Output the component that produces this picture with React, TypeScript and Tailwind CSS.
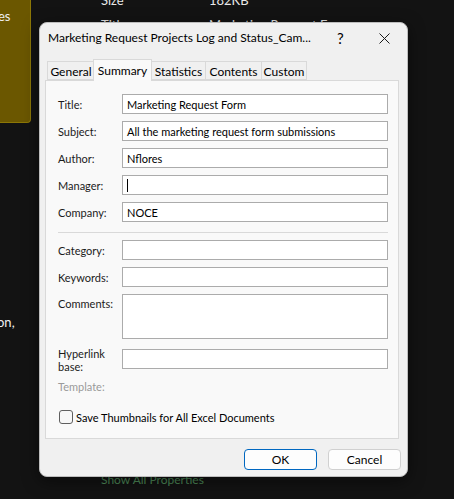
import { useState } from 'react'

// ── Field rows ────────────────────────────────────────────────────────────────

interface FieldProps {
  label: string
  value?: string
  caret?: boolean
}

function Field({ label, value = '', caret = false }: FieldProps) {
  return (
    <div className="flex h-[20px] items-center">
      <span className="w-[64px] shrink-0 text-[#1b1b1b]">{label}</span>
      <div className="flex h-[20px] flex-1 items-center border border-[#ababab] bg-white px-[4px] text-black">
        {caret && <span className="h-[13px] w-px bg-black" />}
        {value}
      </div>
    </div>
  )
}

const tabs = [
  { name: 'General', w: 'w-[48px]' },
  { name: 'Summary', w: 'w-[59px]' },
  { name: 'Statistics', w: 'w-[55px]' },
  { name: 'Contents', w: 'w-[57px]' },
  { name: 'Custom', w: 'w-[46px]' },
]

// ── Component ─────────────────────────────────────────────────────────────────

export default function App() {
  const [active] = useState('Summary')
  const [thumbs, setThumbs] = useState(false)

  return (
    <div className="relative h-[499px] w-[454px] overflow-hidden bg-[#131313] font-['Lato',sans-serif] text-[11px] leading-none">
      {/* Background explorer pane */}
      <div className="absolute left-0 top-0 h-[123px] w-[31px] rounded-br-[4px] border-b border-r border-[#8c7706] bg-[#6b5700]">
        <span className="absolute -left-[2px] top-[10px] text-[13px] text-[#f0f0f0]">es</span>
      </div>
      <div className="absolute left-[101px] top-[-6px] flex flex-col gap-[12px] text-[13px] text-[#e8e8e8]">
        <div className="flex">
          <span className="w-[108px]">Size</span>
          <span>182KB</span>
        </div>
        <div className="flex">
          <span className="w-[108px]">Title</span>
          <span>Marketing Request Form</span>
        </div>
      </div>
      <span className="absolute left-[-3px] top-[316px] text-[13px] text-[#f0f0f0]">on,</span>
      <span className="absolute left-[101px] top-[474px] text-[12px] text-[#4d8a58]">Show All Properties</span>

      {/* Dialog */}
      <div className="absolute left-[39px] top-[22px] flex h-[455px] w-[369px] flex-col rounded-[8px] border border-[#bdbdbd] bg-[#f0f0f0] shadow-[0_4px_16px_rgba(0,0,0,0.5)]">
        {/* Title bar */}
        <div className="flex h-[30px] shrink-0 items-center pl-[8px] pr-[17px] text-[12px] text-black">
          <span className="w-[289px] whitespace-nowrap">Marketing Request Projects Log and Status_Cam...</span>
          <span className="text-[15px]">?</span>
          <svg className="ml-auto" width="11" height="11" viewBox="0 0 11 11" aria-hidden="true">
            <path d="M0.5 0.5L10.5 10.5M10.5 0.5L0.5 10.5" stroke="#1a1a1a" strokeWidth="1" />
          </svg>
        </div>

        {/* Tabs */}
        <div className="ml-[7px] mt-[7px] flex h-[20px] items-end">
          {tabs.map((t) =>
            t.name === active ? (
              <div
                key={t.name}
                className={`relative z-10 -mb-px -ml-px -mr-px flex h-[22px] justify-center border border-b-0 border-[#d9d9d9] bg-[#f9f9f9] pt-[5px] text-[12px] text-black ${t.w}`}
              >
                {t.name}
              </div>
            ) : (
              <div
                key={t.name}
                className={`-mr-px flex h-[19px] items-center justify-center border border-[#d9d9d9] bg-[#f0f0f0] pt-[2px] text-[12px] text-black ${t.w}`}
              >
                {t.name}
              </div>
            ),
          )}
        </div>

        {/* Tab panel */}
        <div className="ml-[5px] mr-[8px] flex h-[359px] flex-col border border-[#d9d9d9] bg-[#f9f9f9] pl-[12px] pr-[10px] pt-[13px]">
          <div className="flex flex-col gap-[7px]">
            <Field label="Title:" value="Marketing Request Form" />
            <Field label="Subject:" value="All the marketing request form submissions" />
            <Field label="Author:" value="Nflores" />
            <Field label="Manager:" caret />
            <Field label="Company:" value="NOCE" />
          </div>

          <div className="mt-[10px] h-px bg-[#d9d9d9]" />

          <div className="mt-[7px] flex flex-col gap-[7px]">
            <Field label="Category:" />
            <Field label="Keywords:" />
            <div className="flex h-[45px]">
              <span className="w-[64px] shrink-0 pt-[4px] text-[#1b1b1b]">Comments:</span>
              <div className="flex-1 border border-[#ababab] bg-white" />
            </div>
          </div>

          <div className="mt-[10px] flex h-[20px]">
            <span className="-mt-[2px] w-[64px] shrink-0 leading-[13px] text-[#1b1b1b]">
              Hyperlink
              <br />
              base:
            </span>
            <div className="flex-1 border border-[#ababab] bg-white" />
          </div>

          <span className="mt-[12px] text-[#9a9a9a]">Template:</span>

          <label className="mt-[18px] flex items-center gap-[3px] text-black">
            <button
              type="button"
              onClick={() => setThumbs(!thumbs)}
              className="ml-px h-[14px] w-[14px] rounded-[3px] border border-[#5f5f5f] bg-[#f7f7f7]"
            />
            Save Thumbnails for All Excel Documents
          </label>
        </div>

        {/* Buttons */}
        <div className="mr-[6px] mt-[10px] flex justify-end gap-[11px]">
          <button
            type="button"
            className="h-[21px] w-[73px] rounded-[4px] border border-[#0067c0] bg-[#fdfdfd] text-[12px] text-black"
          >
            OK
          </button>
          <button
            type="button"
            className="h-[21px] w-[73px] rounded-[4px] border border-[#d0d0d0] bg-[#fdfdfd] text-[12px] text-black"
          >
            Cancel
          </button>
        </div>
      </div>
    </div>
  )
}
